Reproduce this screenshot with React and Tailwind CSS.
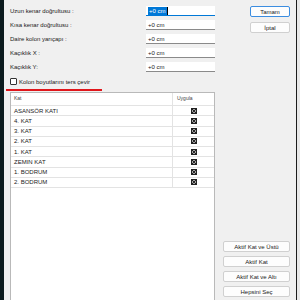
import React from "react";

const fields = [
  "Uzun kenar doğrultusu :",
  "Kısa kenar doğrultusu :",
  "Daire kolon yarıçapı :",
  "Kaçıklık X :",
  "Kaçıklık Y:",
];

const floors = [
  "ASANSÖR KATI",
  "4. KAT",
  "3. KAT",
  "2. KAT",
  "1. KAT",
  "ZEMIN KAT",
  "1. BODRUM",
  "2. BODRUM",
];

const bottomButtons = ["Aktif Kat ve Üstü", "Aktif Kat", "Aktif Kat ve Altı", "Hepsini Seç"];

function CheckMark() {
  return (
    <svg width="6" height="6" viewBox="0 0 6 6">
      <rect x="0.5" y="0.5" width="5" height="5" fill="#fff" stroke="#222" />
      <path d="M1 1 L5 5 M5 1 L1 5" stroke="#222" strokeWidth="1.2" />
    </svg>
  );
}

export default function App() {
  return (
    <div
      className="w-[300px] h-[300px] flex overflow-hidden bg-[#f0f0f0] text-[6px] text-[#1a1a1a] relative"
      style={{ fontFamily: '"Liberation Sans", Arial, sans-serif' }}
    >
      {/* dark canvas strip on the left */}
      <div className="w-[4px] h-full bg-[#0c1b1e] shrink-0" />

      {/* left column: fields + table */}
      <div className="w-[211px] shrink-0 pl-[6px] pt-[6px] flex flex-col">
        <div className="flex flex-col gap-[4px]">
          {fields.map((f, i) => (
            <div key={f} className="flex items-center h-[10px]">
              <span className="w-[136px] leading-none">{f}</span>
              <div
                className={
                  "w-[69px] h-[10px] bg-white flex items-center px-[2px] border-b " +
                  (i === 0 ? "border-[#0078d7]" : "border-[#8a8a8a]")
                }
              >
                {i === 0 ? (
                  <>
                    <span className="bg-[#0078d7] text-white leading-[8px] px-[1px]">+0 cm</span>
                    <span className="w-[1px] h-[8px] bg-black" />
                  </>
                ) : (
                  <span className="leading-none">+0 cm</span>
                )}
              </div>
            </div>
          ))}
        </div>

        <div className="flex items-center gap-[2px] mt-[6px] h-[7px]">
          <div className="w-[7px] h-[7px] border border-[#333] bg-white rounded-[1px]" />
          <span className="leading-none">Kolon boyutlarını ters çevir</span>
        </div>

        {/* table */}
        <div className="mt-[7px] flex-1 bg-white border-l border-r border-t border-[#b9b9b9]">
          <div className="flex h-[13px] items-center text-[5px] text-[#444] border-b border-[#e3e3e3]">
            <span className="flex-1 pl-[3px]">Kat</span>
            <span className="w-[42px] pl-[4px] h-full flex items-center border-l border-[#e3e3e3]">Uygula</span>
          </div>
          {floors.map((f) => (
            <div key={f} className="flex h-[10.25px] items-center border-b border-[#e3e3e3]">
              <span className="flex-1 pl-[3px] leading-none">{f}</span>
              <span className="w-[42px] h-full flex items-center justify-center border-l border-[#e3e3e3]">
                <CheckMark />
              </span>
            </div>
          ))}
        </div>
      </div>

      {/* right column: buttons */}
      <div className="flex-1 flex flex-col pt-[6px] pb-[3px]">
        <div className="flex flex-col gap-[5px] pl-[35px]">
          <div className="w-[40px] h-[11px] bg-[#fdfdfd] border border-[#3b8de0] rounded-[2px] flex items-center justify-center leading-none">
            Tamam
          </div>
          <div className="w-[40px] h-[11px] bg-[#fdfdfd] border border-[#d0d0d0] rounded-[2px] flex items-center justify-center leading-none">
            İptal
          </div>
        </div>
        <div className="mt-auto flex flex-col gap-[4px] pl-[8px]">
          {bottomButtons.map((b) => (
            <div
              key={b}
              className="w-[67px] h-[11px] bg-[#fdfdfd] border border-[#d0d0d0] rounded-[2px] flex items-center justify-center leading-none text-[6px]"
            >
              {b}
            </div>
          ))}
        </div>
      </div>

      {/* right edge */}
      <div className="w-[1px] h-full bg-[#1c1c1c] shrink-0" />
      <div className="w-[3px] h-full bg-[#e8e8e8] shrink-0" />

      {/* red annotation underline */}
      <div className="absolute left-[6px] top-[89px] w-[96px] h-[2px] bg-[#e0161b]" />
    </div>
  );
}
